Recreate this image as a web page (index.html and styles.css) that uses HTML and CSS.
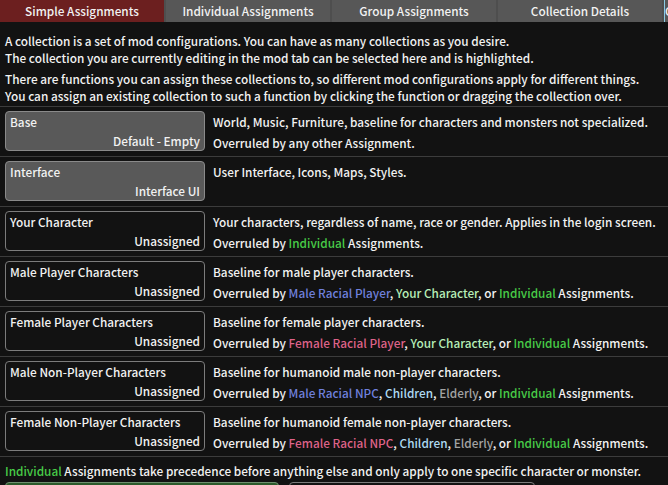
FILE: index.html
```html
<!DOCTYPE html>
<html>
<head>
<meta charset="utf-8">
<link rel="stylesheet" href="styles.css">
</head>
<body>
<div class="tabs">
  <div class="tab active">Simple Assignments</div>
  <div class="tab">Individual Assignments</div>
  <div class="tab">Group Assignments</div>
  <div class="tab">Collection Details</div>
  <div class="tab stub">C</div>
</div>
<div class="intro">
  <p>A collection is a set of mod configurations. You can have as many collections as you desire.<br>The collection you are currently editing in the mod tab can be selected here and is highlighted.</p>
  <p>There are functions you can assign these collections to, so different mod configurations apply for different things.<br>You can assign an existing collection to such a function by clicking the function or dragging the collection over.</p>
</div>
<div class="row">
  <div class="slot filled"><span class="name">Base</span><span class="value">Default - Empty</span></div>
  <div class="desc">World, Music, Furniture, baseline for characters and monsters not specialized.<br>Overruled by any other Assignment.</div>
</div>
<div class="row">
  <div class="slot filled"><span class="name">Interface</span><span class="value">Interface UI</span></div>
  <div class="desc">User Interface, Icons, Maps, Styles.</div>
</div>
<div class="row">
  <div class="slot"><span class="name">Your Character</span><span class="value">Unassigned</span></div>
  <div class="desc">Your characters, regardless of name, race or gender. Applies in the login screen.<br>Overruled by <span class="ind">Individual</span> Assignments.</div>
</div>
<div class="row">
  <div class="slot"><span class="name">Male Player Characters</span><span class="value">Unassigned</span></div>
  <div class="desc">Baseline for male player characters.<br>Overruled by <span class="male">Male Racial Player</span>, <span class="yours">Your Character</span>, or <span class="ind">Individual</span> Assignments.</div>
</div>
<div class="row">
  <div class="slot"><span class="name">Female Player Characters</span><span class="value">Unassigned</span></div>
  <div class="desc">Baseline for female player characters.<br>Overruled by <span class="female">Female Racial Player</span>, <span class="yours">Your Character</span>, or <span class="ind">Individual</span> Assignments.</div>
</div>
<div class="row">
  <div class="slot"><span class="name">Male Non-Player Characters</span><span class="value">Unassigned</span></div>
  <div class="desc">Baseline for humanoid male non-player characters.<br>Overruled by <span class="male">Male Racial NPC</span>, <span class="child">Children</span>, <span class="elder">Elderly</span>, or <span class="ind">Individual</span> Assignments.</div>
</div>
<div class="row">
  <div class="slot"><span class="name">Female Non-Player Characters</span><span class="value">Unassigned</span></div>
  <div class="desc">Baseline for humanoid female non-player characters.<br>Overruled by <span class="female">Female Racial NPC</span>, <span class="child">Children</span>, <span class="elder">Elderly</span>, or <span class="ind">Individual</span> Assignments.</div>
</div>
<div class="footer">
  <p><span class="ind">Individual</span> Assignments take precedence before anything else and only apply to one specific character or monster.</p>
  <div class="bottom">
    <div class="btn green"></div>
    <div class="btn dark"></div>
  </div>
</div>
</body>
</html>
```
FILE: styles.css
```css
html, body {
  margin: 0;
  padding: 0;
  background: #121212;
  overflow: hidden;
}
body {
  width: 668px;
  height: 485px;
  font-family: "Noto Sans CJK JP", "Noto Sans", sans-serif;
  font-weight: 500;
  font-size: 11.8px;
  color: #f2f2f2;
  white-space: nowrap;
}
.tabs {
  display: flex;
  gap: 2px;
  height: 22px;
  background: #4e4e4e;
}
.tab {
  flex: 0 0 164px;
  background: #575757;
  color: #f2f2f2;
  text-align: center;
  line-height: 22px;
  overflow: hidden;
}
.tab.active {
  background: #6c1f1f;
}
.tab.stub {
  flex: 1 0 0;
  border-left: 1px solid #8ccbe3;
  text-align: left;
}
.intro {
  padding: 10px 5px 0;
  border-bottom: 1px solid #3c3c3c;
}
.intro p {
  margin: 0;
  line-height: 17px;
}
.intro p + p {
  margin-top: 4px;
}
.intro p:last-child {
  margin-bottom: 2px;
}
.row {
  display: grid;
  grid-template-columns: 200px 1fr;
  grid-template-rows: 40px;
  column-gap: 8px;
  padding: 4px 5px 5px;
  border-bottom: 1px solid #3c3c3c;
}
.slot {
  box-sizing: border-box;
  height: 40px;
  border: 1px solid #7c7c7c;
  border-radius: 4px;
  padding: 0 4px;
  display: flex;
  flex-direction: column;
  line-height: 19px;
}
.slot.filled {
  background: #595959;
  border-color: #8a8a8a;
}
.slot .value {
  align-self: flex-end;
}
.desc {
  line-height: 21px;
  height: 40px;
}
.ind { color: #48cc48; }
.yours { color: #b7eeb7; }
.male { color: #6f80dc; }
.female { color: #df6289; }
.child { color: #aedaf2; }
.elder { color: #a3a3a3; }
.footer {
  padding: 5px 5px 0;
}
.footer p {
  margin: 0;
  line-height: 17px;
}
.bottom {
  display: flex;
  gap: 10px;
  margin-top: 3px;
}
.btn {
  height: 24px;
  border-radius: 4px;
  box-sizing: border-box;
}
.btn.green {
  width: 274px;
  background: #2b5a2b;
  border: 1px solid #6f8f6f;
}
.btn.dark {
  width: 246px;
  background: #121212;
  border: 1px solid #7c7c7c;
}
```
